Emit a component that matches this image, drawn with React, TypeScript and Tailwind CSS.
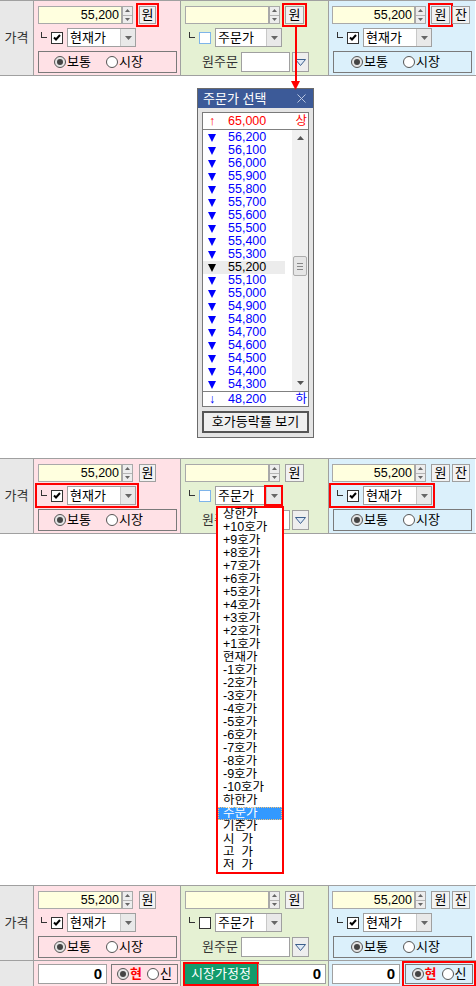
import type { ReactNode } from "react"

const FONT = "font-[family-name:'Liberation_Sans','Noto_Sans_CJK_KR',sans-serif]"

function Spin() {
  return (
    <div className="flex h-[18px] w-[11px] flex-col border border-[#a9a9a9] bg-[#ededed]">
      <div className="flex flex-1 items-center justify-center border-b border-[#b5b5b5]">
        <svg width="5" height="3" viewBox="0 0 5 3"><path d="M0 3L2.5 0L5 3Z" fill="#666" /></svg>
      </div>
      <div className="flex flex-1 items-center justify-center">
        <svg width="5" height="3" viewBox="0 0 5 3"><path d="M0 0L2.5 3L5 0Z" fill="#666" /></svg>
      </div>
    </div>
  )
}

function Btn({ children, hl, className = "" }: { children: ReactNode; hl?: boolean; className?: string }) {
  return (
    <div
      className={`flex h-[18px] w-[17px] items-center justify-center border border-[#a0a0a0] bg-[#f2f2f2] text-[13px] ${className} ${
        hl ? "outline-2 outline-offset-1 outline-[#ff0000]" : ""
      }`}
    >
      {children}
    </div>
  )
}

function Corner() {
  return <span className="mb-[6px] h-[6px] w-[6px] shrink-0 border-b border-l border-[#333]" />
}

function Check({ on, tint }: { on?: boolean; tint?: boolean }) {
  return (
    <span
      className={`flex h-[12px] w-[12px] shrink-0 items-center justify-center border bg-white ${
        tint ? "border-[#7eb4ea]" : "border-[#333]"
      }`}
    >
      {on && (
        <svg width="8" height="7" viewBox="0 0 8 7">
          <path d="M1 3.5L3 5.5L7 1" stroke="#000" strokeWidth="2" fill="none" />
        </svg>
      )}
    </span>
  )
}

function Select({ text, width, arrowHl }: { text: string; width: string; arrowHl?: boolean }) {
  return (
    <div className={`flex h-[19px] ${width} border border-[#a0a0a0] bg-white`}>
      <div className="flex-1 pl-[2px] text-[13px] leading-[17px]">{text}</div>
      <div
        className={`flex w-[15px] items-center justify-center border-l border-[#c8c8c8] bg-[#e9e9e9] ${
          arrowHl ? "outline-2 outline-offset-0 outline-[#ff0000]" : ""
        }`}
      >
        <svg width="7" height="4" viewBox="0 0 7 4"><path d="M0 0L3.5 4L7 0Z" fill="#666" /></svg>
      </div>
    </div>
  )
}

function Radio({ on }: { on?: boolean }) {
  return (
    <span
      className={`flex h-[12px] w-[12px] items-center justify-center rounded-full border border-[#555] ${
        on ? "bg-[#e4e4e4]" : "bg-white"
      }`}
    >
      {on && <span className="h-[6px] w-[6px] rounded-full bg-[#444]" />}
    </span>
  )
}

function ModeBox({ width, pad }: { width: string; pad: string }) {
  return (
    <div className={`flex h-[22px] ${width} ${pad} items-center gap-[15px] border border-[#7a7a7a] text-[13px]`}>
      <span className="flex items-center gap-[1px]">
        <Radio on />
        보통
      </span>
      <span className="flex items-center gap-[1px]">
        <Radio />
        시장
      </span>
    </div>
  )
}

function PriceInput({ width, value }: { width: string; value: string }) {
  return (
    <div className={`h-[18px] ${width} border border-[#a9a9a9] bg-[#ffffdf] pr-[2px] text-right text-[12.5px] leading-[16px]`}>
      {value}
    </div>
  )
}

const DROP_ITEMS = [
  "상한가",
  ...Array.from({ length: 10 }, (_, i) => `+${10 - i}호가`),
  "현재가",
  ...Array.from({ length: 10 }, (_, i) => `-${i + 1}호가`),
  "하한가",
  "주문가",
  "기준가",
  "시  가",
  "고  가",
  "저  가",
]

function Panel({ mode }: { mode: "a" | "b" | "c" }) {
  const a = mode === "a"
  const b = mode === "b"
  return (
    <div className="relative flex h-[76px] shrink-0 border-y border-[#a0a0a0]">
      <div className="flex w-[34px] items-center justify-center border-r border-[#a0a0a0] bg-[#e8e8e8] text-[13px] text-[#333]">
        가격
      </div>

      {/* 매수 */}
      <div className="flex w-[147px] flex-col gap-[4px] border-r border-[#a0a0a0] bg-[#ffe1e6] pl-[4px] pt-[5px]">
        <div className="flex h-[18px] items-center">
          <PriceInput width="w-[84px]" value="55,200" />
          <Spin />
          <Btn className="ml-[6px]" hl={a}>원</Btn>
        </div>
        <div
          className={`flex h-[19px] w-[98px] items-center gap-[4px] pl-[3px] ${
            b ? "outline-2 outline-offset-1 outline-[#ff0000]" : ""
          }`}
        >
          <Corner />
          <Check on />
          <Select text="현재가" width="w-[71px]" />
        </div>
        <ModeBox width="w-[139px]" pad="pl-[15px]" />
      </div>

      {/* 정정 */}
      <div className="flex w-[148px] flex-col gap-[4px] border-r border-[#a0a0a0] bg-[#e5f1d3] pl-[4px] pt-[5px]">
        <div className="flex h-[18px] items-center">
          <PriceInput width="w-[84px]" value="" />
          <Spin />
          <Btn className="ml-[5px] w-[19px]" hl={a}>원</Btn>
        </div>
        <div className="flex h-[19px] items-center gap-[4px] pl-[4px]">
          <Corner />
          <Check tint={mode !== "c"} />
          <Select text="주문가" width="w-[67px]" arrowHl={b} />
        </div>
        <div className="flex h-[22px] items-center pl-[17px] text-[13px] text-[#333]">
          <span className="w-[39px]">원주문</span>
          <div className="h-[20px] w-[49px] border border-[#a0a0a0] bg-white" />
          <div className="ml-[2px] flex h-[20px] w-[17px] items-center justify-center border border-[#a0a0a0] bg-[#eeeeee]">
            <svg width="11" height="7" viewBox="0 0 11 7">
              <path d="M0.5 0.5H10.5L5.5 6.5Z" fill="#dfe9f5" stroke="#3c5f8c" strokeWidth="1" />
            </svg>
          </div>
        </div>
      </div>

      {/* 매도 */}
      <div className="flex w-[146px] flex-col gap-[4px] bg-[#dbf0fb] pl-[3px] pt-[5px]">
        <div className="flex h-[18px] items-center">
          <PriceInput width="w-[83px]" value="55,200" />
          <Spin />
          <Btn className="ml-[5px] w-[19px]" hl={a}>원</Btn>
          <Btn className="ml-[2px] w-[18px]">잔</Btn>
        </div>
        <div
          className={`flex h-[19px] w-[100px] items-center gap-[4px] pl-[5px] ${
            b ? "outline-2 outline-offset-1 outline-[#ff0000]" : ""
          }`}
        >
          <Corner />
          <Check on />
          <Select text="현재가" width="w-[69px]" />
        </div>
        <div className="pl-[1px]">
          <ModeBox width="w-[139px]" pad="pl-[17px]" />
        </div>
      </div>

      {a && (
        <div className="pointer-events-none absolute left-[291px] top-[26px] z-10 flex flex-col items-center">
          <div className="h-[54px] w-[2px] bg-[#ff0000]" />
          <svg width="9" height="9" viewBox="0 0 9 9"><path d="M0 0L4.5 9L9 0Z" fill="#ff0000" /></svg>
        </div>
      )}

      {b && (
        <div className="absolute left-[216px] top-[47px] z-10 w-[68px] border-2 border-[#ff0000] bg-white">
          {DROP_ITEMS.map((t) => (
            <div
              key={t}
              className={`h-[13px] overflow-hidden whitespace-pre pl-[5px] text-[12.5px] leading-[13px] ${
                t === "주문가"
                  ? "bg-[#3399ff] text-white outline-1 outline-offset-[-1px] outline-dotted outline-[#f3c27a]"
                  : "text-black"
              }`}
            >
              {t}
            </div>
          ))}
        </div>
      )}
    </div>
  )
}

function Tri({ dark }: { dark?: boolean }) {
  return (
    <svg width="8" height="8" viewBox="0 0 8 8">
      <path d="M0 0H8L4 8Z" fill={dark ? "#000" : "#0000ff"} />
    </svg>
  )
}

function PricePopup() {
  const rows = Array.from({ length: 20 }, (_, i) => 56200 - i * 100)
  return (
    <div className="ml-[197px] flex w-[117px] flex-col border border-[#6b6b6b] bg-[#e4e4e4]">
      <div className="flex h-[19px] items-center justify-between bg-[#3c5a98] pl-[5px] pr-[7px] text-[13px] text-white">
        <span>주문가 선택</span>
        <svg width="9" height="9" viewBox="0 0 9 9">
          <path d="M0.5 0.5L8.5 8.5M8.5 0.5L0.5 8.5" stroke="#b9c6e0" strokeWidth="1" />
        </svg>
      </div>
      <div className="mx-[4px] mt-[4px] border border-[#7a7a7a] bg-white">
        <div className="flex h-[17px] items-center border-b border-[#808080] text-[12.5px] text-[#ff0000]">
          <span className="w-[25px] pl-[6px] font-bold">↑</span>
          <span className="flex-1">65,000</span>
          <span className="pr-[1px]">상</span>
        </div>
        <div className="flex h-[261px]">
          <div className="flex-1 pt-[1px]">
            {rows.map((v) => {
              const cur = v === 55200
              return (
                <div
                  key={v}
                  className={`mr-[7px] flex h-[13px] items-center text-[12.5px] leading-[13px] ${
                    cur ? "bg-[#ececec] text-black" : "text-[#0000ff]"
                  }`}
                >
                  <span className="flex w-[25px] pl-[5px]">
                    <Tri dark={cur} />
                  </span>
                  {v.toLocaleString("en-US")}
                </div>
              )
            })}
          </div>
          <div className="flex w-[16px] flex-col items-center bg-[#f0f0f0]">
            <div className="flex h-[16px] items-center justify-center">
              <svg width="7" height="4" viewBox="0 0 7 4"><path d="M0 4L3.5 0L7 4Z" fill="#555" /></svg>
            </div>
            <div className="mt-[110px] flex h-[20px] w-[14px] flex-col items-center justify-center gap-[2px] rounded-[2px] border border-[#adadad] bg-[#e6e6e6]">
              <span className="h-[1px] w-[6px] bg-[#888]" />
              <span className="h-[1px] w-[6px] bg-[#888]" />
              <span className="h-[1px] w-[6px] bg-[#888]" />
            </div>
            <div className="mt-auto flex h-[16px] items-center justify-center">
              <svg width="7" height="4" viewBox="0 0 7 4"><path d="M0 0L3.5 4L7 0Z" fill="#555" /></svg>
            </div>
          </div>
        </div>
        <div className="flex h-[15px] items-center border-t border-[#808080] text-[12.5px] text-[#0000ff]">
          <span className="w-[25px] pl-[6px] font-bold">↓</span>
          <span className="flex-1">48,200</span>
          <span className="pr-[1px]">하</span>
        </div>
      </div>
      <div className="mx-[4px] my-[4px] flex h-[22px] items-center justify-center border-2 border-[#555] bg-[#efefef] text-[13px]">
        호가등락률 보기
      </div>
    </div>
  )
}

function HyunBox({ width, hl }: { width: string; hl?: boolean }) {
  return (
    <div
      className={`flex h-[20px] ${width} items-center justify-center gap-[5px] border border-[#7a7a7a] text-[13px] ${
        hl ? "outline-2 outline-offset-1 outline-[#ff0000]" : ""
      }`}
    >
      <span className="flex items-center gap-[1px]">
        <Radio on />
        <b className="text-[#ff0000]">현</b>
      </span>
      <span className="flex items-center gap-[1px]">
        <Radio />
        신
      </span>
    </div>
  )
}

function QtyInput({ width }: { width: string }) {
  return (
    <div className={`h-[20px] ${width} border border-[#a0a0a0] bg-white pr-[4px] text-right text-[15px] font-bold leading-[18px]`}>
      0
    </div>
  )
}

function ExtraRow() {
  return (
    <div className="flex h-[26px] shrink-0">
      <div className="w-[34px] border-r border-[#a0a0a0] bg-[#e8e8e8]" />
      <div className="flex w-[147px] gap-[4px] border-r border-[#a0a0a0] bg-[#ffe1e6] pl-[4px] pt-[3px]">
        <QtyInput width="w-[69px]" />
        <HyunBox width="w-[67px]" />
      </div>
      <div className="flex w-[148px] gap-[1px] border-r border-[#a0a0a0] bg-[#e5f1d3] pl-[4px] pt-[3px]">
        <div className="flex h-[20px] w-[72px] items-center justify-center bg-[#129b6c] text-[13px] text-white outline-2 outline-offset-0 outline-[#ff0000]">
          시장가정정
        </div>
        <QtyInput width="w-[68px]" />
      </div>
      <div className="flex w-[146px] gap-[5px] bg-[#dbf0fb] pl-[3px] pt-[3px]">
        <QtyInput width="w-[68px]" />
        <HyunBox width="w-[68px]" hl />
      </div>
    </div>
  )
}

export default function App() {
  return (
    <div className={`flex h-[986px] w-[476px] flex-col overflow-hidden bg-white text-black ${FONT}`}>
      <Panel mode="a" />
      <div className="h-[382px] shrink-0 pt-[12px]">
        <PricePopup />
      </div>
      <Panel mode="b" />
      <div className="h-[351px] shrink-0" />
      <Panel mode="c" />
      <ExtraRow />
    </div>
  )
}
